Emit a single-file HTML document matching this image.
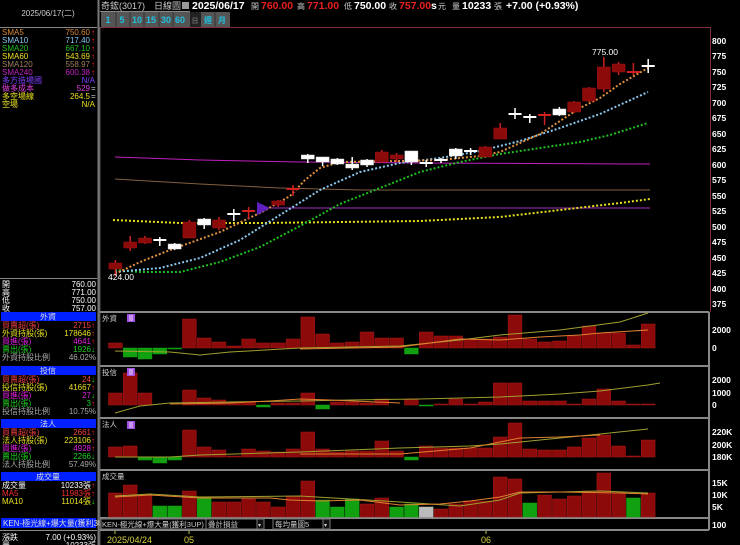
<!DOCTYPE html>
<html><head><meta charset="utf-8"><style>
html,body{margin:0;padding:0;background:#000;width:740px;height:545px;overflow:hidden}
svg{display:block}
text{font-family:"Liberation Sans","Noto Sans CJK TC",sans-serif}
.s{font-size:8px}
.ax{font-size:8.5px;fill:#fff;font-weight:bold}
</style></head><body>
<svg id="c" width="740" height="545" viewBox="0 0 740 545" xmlns="http://www.w3.org/2000/svg">
<rect width="740" height="545" fill="#000"/>
<!-- left panel -->
<text x="48" y="16" class="s" fill="#ccc" text-anchor="middle">2025/06/17(二)</text>
<line x1="0" y1="27.5" x2="97" y2="27.5" stroke="#888"/>
<line x1="98.5" y1="0" x2="98.5" y2="545" stroke="#777" stroke-width="2"/>
<g class="s">
<text x="2" y="35" fill="#d88a30">SMA5</text><text x="90" y="35" fill="#d88a30" text-anchor="end">750.60</text><text x="91" y="35" fill="#f22">↑</text>
<text x="2" y="43" fill="#8ac8f0">SMA10</text><text x="90" y="43" fill="#8ac8f0" text-anchor="end">717.40</text><text x="91" y="43" fill="#f22">↑</text>
<text x="2" y="51" fill="#20c020">SMA20</text><text x="90" y="51" fill="#20c020" text-anchor="end">667.10</text><text x="91" y="51" fill="#f22">↑</text>
<text x="2" y="59" fill="#e8e020">SMA60</text><text x="90" y="59" fill="#e8e020" text-anchor="end">543.69</text><text x="91" y="59" fill="#f22">↑</text>
<text x="2" y="67" fill="#a08060">SMA120</text><text x="90" y="67" fill="#a08060" text-anchor="end">558.97</text><text x="91" y="67" fill="#f22">↑</text>
<text x="2" y="75" fill="#c020c0">SMA240</text><text x="90" y="75" fill="#c020c0" text-anchor="end">600.38</text><text x="91" y="75" fill="#f22">↑</text>
<text x="2" y="83" fill="#8040ff">多方造場國</text><text x="95" y="83" fill="#8040ff" text-anchor="end">N/A</text>
<text x="2" y="91" fill="#e040e0">做多成本</text><text x="90" y="91" fill="#e040e0" text-anchor="end">529</text><text x="91" y="91" fill="#ccc">=</text>
<text x="2" y="99" fill="#e8e020">多空場線</text><text x="90" y="99" fill="#e8e020" text-anchor="end">264.5</text><text x="91" y="99" fill="#ccc">=</text>
<text x="2" y="107" fill="#e8e020">空場</text><text x="95" y="107" fill="#e8e020" text-anchor="end">N/A</text>
</g>
<line x1="0" y1="278.5" x2="97" y2="278.5" stroke="#888"/>
<g class="s" fill="#fff">
<text x="2" y="287">開</text><text x="96" y="287" text-anchor="end">760.00</text>
<text x="2" y="295">高</text><text x="96" y="295" text-anchor="end">771.00</text>
<text x="2" y="303">低</text><text x="96" y="303" text-anchor="end">750.00</text>
<text x="2" y="311">收</text><text x="96" y="311" text-anchor="end">757.00</text>
</g>
<g class="s">
<rect x="1" y="312" width="95" height="9" fill="#0020ff"/><text x="48" y="319.5" fill="#ddd" text-anchor="middle">外資</text>
<text x="2" y="328" fill="#f04040">買賣超(張)</text><text x="91" y="328" fill="#f04040" text-anchor="end">2715</text><text x="91" y="328" fill="#f22">↑</text>
<text x="2" y="336" fill="#e8e020">外資持股(張)</text><text x="91" y="336" fill="#e8e020" text-anchor="end">178646</text><text x="91" y="336" fill="#f22">↑</text>
<text x="2" y="344" fill="#e020e0">買進(張)</text><text x="91" y="344" fill="#e020e0" text-anchor="end">4641</text><text x="91" y="344" fill="#f22">↑</text>
<text x="2" y="352" fill="#20d020">賣出(張)</text><text x="91" y="352" fill="#20d020" text-anchor="end">1926</text><text x="91" y="352" fill="#2d2">↓</text>
<text x="2" y="360" fill="#aaa">外資持股比例</text><text x="96" y="360" fill="#aaa" text-anchor="end">46.02%</text>
<rect x="1" y="366" width="95" height="9" fill="#0020ff"/><text x="48" y="373.5" fill="#ddd" text-anchor="middle">投信</text>
<text x="2" y="382" fill="#f04040">買賣超(張)</text><text x="91" y="382" fill="#f04040" text-anchor="end">24</text><text x="91" y="382" fill="#2d2">↓</text>
<text x="2" y="390" fill="#e8e020">投信持股(張)</text><text x="91" y="390" fill="#e8e020" text-anchor="end">41667</text><text x="91" y="390" fill="#f22">↑</text>
<text x="2" y="398" fill="#e020e0">買進(張)</text><text x="91" y="398" fill="#e020e0" text-anchor="end">27</text><text x="91" y="398" fill="#2d2">↓</text>
<text x="2" y="406" fill="#20d020">賣出(張)</text><text x="91" y="406" fill="#20d020" text-anchor="end">3</text><text x="91" y="406" fill="#f22">↑</text>
<text x="2" y="414" fill="#aaa">投信持股比例</text><text x="96" y="414" fill="#aaa" text-anchor="end">10.75%</text>
<rect x="1" y="419" width="95" height="9" fill="#0020ff"/><text x="48" y="426.5" fill="#ddd" text-anchor="middle">法人</text>
<text x="2" y="435" fill="#f04040">買賣超(張)</text><text x="91" y="435" fill="#f04040" text-anchor="end">2661</text><text x="91" y="435" fill="#f22">↑</text>
<text x="2" y="443" fill="#e8e020">法人持股(張)</text><text x="91" y="443" fill="#e8e020" text-anchor="end">223106</text><text x="91" y="443" fill="#f22">↑</text>
<text x="2" y="451" fill="#e020e0">買進(張)</text><text x="91" y="451" fill="#e020e0" text-anchor="end">4928</text><text x="91" y="451" fill="#f22">↑</text>
<text x="2" y="459" fill="#20d020">賣出(張)</text><text x="91" y="459" fill="#20d020" text-anchor="end">2266</text><text x="91" y="459" fill="#2d2">↓</text>
<text x="2" y="467" fill="#aaa">法人持股比例</text><text x="96" y="467" fill="#aaa" text-anchor="end">57.49%</text>
<rect x="1" y="472" width="95" height="9" fill="#0020ff"/><text x="48" y="479.5" fill="#ddd" text-anchor="middle">成交量</text>
<text x="2" y="488" fill="#fff">成交量</text><text x="91" y="488" fill="#fff" text-anchor="end">10233張</text><text x="91" y="488" fill="#f22">↑</text>
<text x="2" y="496" fill="#f03030">MA5</text><text x="91" y="496" fill="#f03030" text-anchor="end">11983張</text><text x="91" y="496" fill="#f22">↑</text>
<text x="2" y="504" fill="#e8e020">MA10</text><text x="91" y="504" fill="#e8e020" text-anchor="end">11014張</text><text x="91" y="504" fill="#2d2">↓</text>
<rect x="1" y="518" width="95" height="10" fill="#0020ff"/><text x="3" y="526" fill="#ddd">KEN-極光線+爆大量(獲利3UP)</text>
<line x1="0" y1="530.5" x2="97" y2="530.5" stroke="#888"/>
<text x="2" y="540" fill="#fff">漲跌</text><text x="96" y="540" fill="#fff" text-anchor="end">7.00 (+0.93%)</text>
<text x="2" y="548" fill="#fff">量</text><text x="96" y="548" fill="#fff" text-anchor="end">10233張</text>
</g>
<!-- top bar -->
<g font-size="10.5">
<text x="101" y="9" fill="#ccc" font-size="9">奇鋐(3017)</text>
<line x1="100" y1="11.5" x2="190" y2="11.5" stroke="#888"/>
<text x="154" y="9" fill="#ccc" font-size="9">日線圖</text>
<rect x="182" y="2" width="7" height="7" fill="#999"/>
<text x="192" y="9" fill="#fff" font-weight="bold">2025/06/17</text>
<text x="251" y="9" fill="#ccc" font-size="8">開</text><text x="261" y="9" fill="#e82020" font-weight="bold">760.00</text>
<text x="297" y="9" fill="#ccc" font-size="8">高</text><text x="307" y="9" fill="#e82020" font-weight="bold">771.00</text>
<text x="344" y="9" fill="#ccc" font-size="8">低</text><text x="354" y="9" fill="#fff" font-weight="bold">750.00</text>
<text x="389" y="9" fill="#ccc" font-size="8">收</text><text x="399" y="9" fill="#e82020" font-weight="bold">757.00</text>
<text x="431" y="9" fill="#fff" font-weight="bold">s</text><text x="438" y="9" fill="#ccc" font-size="8">元</text>
<text x="452" y="9" fill="#ccc" font-size="8">量</text><text x="462" y="9" fill="#fff" font-weight="bold">10233</text><text x="494" y="9" fill="#ccc" font-size="8">張</text>
<text x="506" y="9" fill="#fff" font-weight="bold">+7.00 (+0.93%)</text>
</g>
<g font-size="9" font-weight="bold" fill="#20c0e0">
<rect x="101" y="12" width="89" height="15" fill="#555"/>
<rect x="190" y="12" width="11" height="15" fill="#222"/>
<rect x="201" y="12" width="29" height="15" fill="#555"/>
<g stroke="#333"><line x1="116" y1="12" x2="116" y2="27"/><line x1="130" y1="12" x2="130" y2="27"/><line x1="144" y1="12" x2="144" y2="27"/><line x1="159" y1="12" x2="159" y2="27"/><line x1="173" y1="12" x2="173" y2="27"/><line x1="215" y1="12" x2="215" y2="27"/></g>
<text x="108" y="23" text-anchor="middle">1</text><text x="122" y="23" text-anchor="middle">5</text><text x="137" y="23" text-anchor="middle">10</text><text x="151" y="23" text-anchor="middle">15</text><text x="166" y="23" text-anchor="middle">30</text><text x="180" y="23" text-anchor="middle">60</text>
<text x="195" y="23" text-anchor="middle" fill="#666" font-size="7">日</text><text x="208" y="23" text-anchor="middle" font-size="8">週</text><text x="222" y="23" text-anchor="middle" font-size="8">月</text>
</g>
<!-- main frame -->
<line x1="100" y1="27.5" x2="710" y2="27.5" stroke="#803040"/>
<line x1="710.5" y1="27" x2="710.5" y2="312" stroke="#803040"/>
<line x1="100" y1="27" x2="100" y2="545" stroke="#555"/>
<g class="ax">
<text x="712" y="44">800</text><text x="712" y="59">775</text><text x="712" y="75">750</text><text x="712" y="90">725</text><text x="712" y="106">700</text><text x="712" y="121">675</text><text x="712" y="137">650</text><text x="712" y="152">625</text><text x="712" y="168">600</text><text x="712" y="183">575</text><text x="712" y="199">550</text><text x="712" y="214">525</text><text x="712" y="230">500</text><text x="712" y="245">475</text><text x="712" y="261">450</text><text x="712" y="276">425</text><text x="712" y="292">400</text><text x="712" y="307">375</text>
<text x="712" y="333">2000</text><text x="712" y="351">0</text>
<text x="712" y="383">2000</text><text x="712" y="396">1000</text><text x="712" y="408">0</text>
<text x="712" y="435">220K</text><text x="712" y="448">200K</text><text x="712" y="460">180K</text>
<text x="712" y="486">15K</text><text x="712" y="498">10K</text><text x="712" y="510">5K</text>
<text x="712" y="528">100</text>
</g>
<!-- MA lines -->
<polyline fill="none" stroke="#c020c0" stroke-width="1" points="115,157 200,160 300,162 420,163 650,164"/>
<polyline fill="none" stroke="#806040" stroke-width="1" points="115,179 200,184 280,188 360,190 650,190"/>
<line x1="262" y1="208" x2="650" y2="208" stroke="#a030c0" stroke-width="1"/>
<polyline fill="none" stroke="#e8e020" stroke-width="2" stroke-dasharray="2,2" points="113,220 180,223 260,223 340,222 420,221 500,217 560,210 620,203 650,199"/>
<polyline fill="none" stroke="#20c020" stroke-width="2" stroke-dasharray="2,2" points="115,270 140,272 180,272 220,262 260,247 300,226 340,204 380,188 420,172 460,162 500,154 540,148 580,142 610,135 648,123"/>
<polyline fill="none" stroke="#8ac8f0" stroke-width="2" stroke-dasharray="2,2" points="115,272 160,268 200,258 240,240 280,215 320,190 360,172 400,163 440,158 480,151 520,141 560,128 600,114 648,92"/>
<polyline fill="none" stroke="#e09040" stroke-width="2" stroke-dasharray="2,2" points="115,274 140,262 170,250 220,232 262,212 290,196 305,180 320,168 340,162 400,161 440,160 480,156 500,152 540,134 580,108 600,98 620,84 648,68"/>
<g id="candles"></g>
<polygon points="257,202 257,215 270,208" fill="#6020c0"/>
<text x="592" y="55" fill="#fff" font-size="8.5">775.00</text>
<text x="108" y="280" fill="#fff" font-size="8.5">424.00</text>
<!-- subpanel separators -->
<g stroke="#888" stroke-width="2">
<line x1="100" y1="312" x2="709" y2="312"/><line x1="100" y1="366" x2="709" y2="366"/><line x1="100" y1="418" x2="709" y2="418"/><line x1="100" y1="470" x2="709" y2="470"/><line x1="100" y1="518" x2="709" y2="518"/><line x1="100" y1="530" x2="709" y2="530"/>
<line x1="709" y1="312" x2="709" y2="530"/>
</g>
<g id="bars"></g>
<g font-size="7.5" fill="#ccc">
<text x="102" y="321">外資</text><text x="102" y="375">投信</text><text x="102" y="427">法人</text><text x="102" y="479">成交量</text>
</g>
<g fill="#a050e0"><rect x="127" y="314" width="8" height="8"/><rect x="127" y="368" width="8" height="8"/><rect x="127" y="421" width="8" height="8"/></g>
<g stroke="#fff" stroke-width="0.8"><line x1="129" y1="316" x2="133" y2="316"/><line x1="129" y1="318" x2="133" y2="318"/><line x1="129" y1="320" x2="133" y2="320"/><line x1="129" y1="370" x2="133" y2="370"/><line x1="129" y1="372" x2="133" y2="372"/><line x1="129" y1="374" x2="133" y2="374"/><line x1="129" y1="423" x2="133" y2="423"/><line x1="129" y1="425" x2="133" y2="425"/><line x1="129" y1="427" x2="133" y2="427"/></g>
<!-- bottom bar -->
<rect x="101" y="519" width="105" height="10" fill="#000" stroke="#777"/>
<text x="102" y="527" font-size="7.5" fill="#ccc">KEN-極光線+爆大量(獲利3UP)</text>
<rect x="206" y="519" width="56" height="10" fill="#000" stroke="#777"/><text x="208" y="527" font-size="7.5" fill="#ccc">疊計損益</text>
<rect x="257" y="519" width="7" height="10" fill="#111" stroke="#777"/><text x="258" y="527" font-size="6" fill="#ccc">▾</text>
<rect x="273" y="519" width="55" height="10" fill="#000" stroke="#777"/><text x="275" y="527" font-size="7.5" fill="#ccc">每均量圖5</text>
<rect x="323" y="519" width="7" height="10" fill="#111" stroke="#777"/><text x="324" y="527" font-size="6" fill="#ccc">▾</text>
<g stroke="#c0c040"><line x1="115" y1="531" x2="115" y2="534"/><line x1="189" y1="531" x2="189" y2="534"/><line x1="486" y1="531" x2="486" y2="534"/></g>
<g font-size="9" fill="#d8d040"><text x="107" y="543">2025/04/24</text><text x="184" y="543">05</text><text x="481" y="543">06</text></g>
<script>
var NS="http://www.w3.org/2000/svg";
function el(p,t,a){var e=document.createElementNS(NS,t);for(var k in a)e.setAttribute(k,a[k]);p.appendChild(e);return e;}
var R="#8c0a0a",RL="#d02020",W="#fff";
// cx index, bodyTop, bodyBot, wickTop, wickBot, color
var C=[[0,263,269,260,276,'r'],[1,242,248,236,251,'r'],[2,238,243,236,244,'r'],[3,240,241,237,246,'w'],[4,244,249,243,250,'w'],[5,222,238,220,238,'r'],[6,219,225,218,229,'w'],[7,220,228,217,230,'r'],[8,214,215,209,221,'w'],[9,211,212,207,219,'r'],
[11,201,205,200,207,'r'],[12,189,190,185,196,'r'],[13,155,159,154,163,'w'],[14,157,162,157,166,'w'],[15,159,164,158,165,'w'],[16,164,168,157,170,'w'],[17,160,165,159,167,'w'],[18,152,162,150,163,'r'],[19,155,159,153,162,'r'],[20,151,162,151,165,'w'],[21,163,164,160,167,'w'],[22,160,161,158,163,'w'],[23,149,156,148,159,'w'],[24,151,152,148,155,'w'],[25,147,157,146,157,'r'],[26,128,139,123,139,'r'],[27,114,115,108,119,'w'],[28,117,118,114,123,'w'],[29,115,116,112,125,'r'],[30,109,115,107,116,'w'],[31,102,112,101,113,'r'],[32,88,101,87,102,'r'],[33,67,89,57,92,'r'],[34,64,72,62,75,'r'],[35,72,73,63,75,'r'],[36,66,67,59,73,'w']];
var g=document.getElementById('candles');
function cx(i){return 115.4+14.8*i;}
C.forEach(function(c){var x=cx(c[0]),col=c[5]=='r'?R:W,wc=c[5]=='r'?RL:W;
el(g,'line',{x1:x,x2:x,y1:c[3],y2:c[4],stroke:wc,'stroke-width':1.5});
var h=c[2]-c[1];if(h<2){el(g,'line',{x1:x-6.5,x2:x+6.5,y1:c[1],y2:c[1],stroke:wc,'stroke-width':2});}
else el(g,'rect',{x:x-6.5,y:c[1],width:13,height:h,fill:col,stroke:c[5]=='r'?'#a01010':'#ddd','stroke-width':0.5});});
var b=document.getElementById('bars');
function bar(i,base,v,col){var x=108+14.8*i;var y=v>0?base-v:base,h=Math.abs(v);if(h<1)h=1;
el(b,'rect',{x:x+0.5,y:y,width:13.8,height:h,fill:col,stroke:col=='#8c0a0a'?'#a81818':col,'stroke-width':0.5});}
var G="#10a010",RR="#8c0a0a";
var F=[5,-9,-11,-6,-1,29,10,6,2,9,5,5,9,31,14,5,6,16,10,10,-6,16,12,12,9,9,11,33,9,6,7,12,22,15,15,3,24];
F.forEach(function(v,i){bar(i,348,v,v>0?RR:G);});
var T=[12,32,12,0,0,15,7,5,3,3,-2,2,2,12,-4,3,3,2,6,0,6,-1,1,6,1,3,22,22,4,4,4,1,6,16,4,1,1];
T.forEach(function(v,i){if(v)bar(i,405,v,v>0?RR:G);});
var L=[10,11,-3,-6,-3,27,10,7,1,8,6,5,8,25,8,5,6,6,16,6,-3,11,9,9,9,9,20,34,8,7,7,10,19,22,11,1,17];
L.forEach(function(v,i){bar(i,457,v,v>0?RR:G);});
var V=[[493,'r'],[485,'r'],[495,'r'],[506,'g'],[506,'g'],[491,'r'],[497,'g'],[502,'r'],[502,'r'],[499,'r'],[502,'r'],[507,'r'],[496,'r'],[481,'r'],[500,'g'],[507,'g'],[499,'g'],[504,'r'],[498,'r'],[507,'g'],[504,'g'],[507,'s'],[509,'r'],[504,'r'],[501,'r'],[501,'r'],[477,'r'],[479,'r'],[503,'g'],[495,'r'],[499,'r'],[496,'r'],[491,'r'],[473,'r'],[493,'r'],[498,'g'],[493,'r']];
V.forEach(function(v,i){bar(i,517,517-v[0],v[1]=='r'?RR:v[1]=='g'?G:'#bbb');});
function pl(pts,col){el(b,'polyline',{points:pts,fill:'none',stroke:col,'stroke-width':1});}
pl("115,351 170,352 200,355 230,352 300,348 400,346 460,340 500,335 560,330 620,322 648,313","#a0a030");
pl("300,349 400,347 430,343 460,339 500,340 540,337 580,335 600,333 648,330","#e08030");
pl("115,413 140,406 170,403 230,402 300,401 350,400 420,399 500,397 560,394 600,391 648,385 660,383","#a0a030");
pl("170,404 230,403 270,401 300,399 330,400 400,403","#e08030");
pl("115,457 170,457 200,455 300,452 400,448 470,446 500,444 560,438 600,434 648,429","#a0a030");
pl("300,454 400,454 470,448 500,442 520,438 560,437 600,435","#e08030");
pl("115,496 150,494 200,497 300,496 350,499 400,502 430,504 460,506 500,500 520,493 560,492 600,491 648,493","#a0a030");
pl("115,497 150,495 200,498 270,498 290,500 320,501 360,500 400,505 440,504 470,501 500,497 520,492 560,492 620,493 648,494","#e08030");
</script>
</svg>
</body></html>
